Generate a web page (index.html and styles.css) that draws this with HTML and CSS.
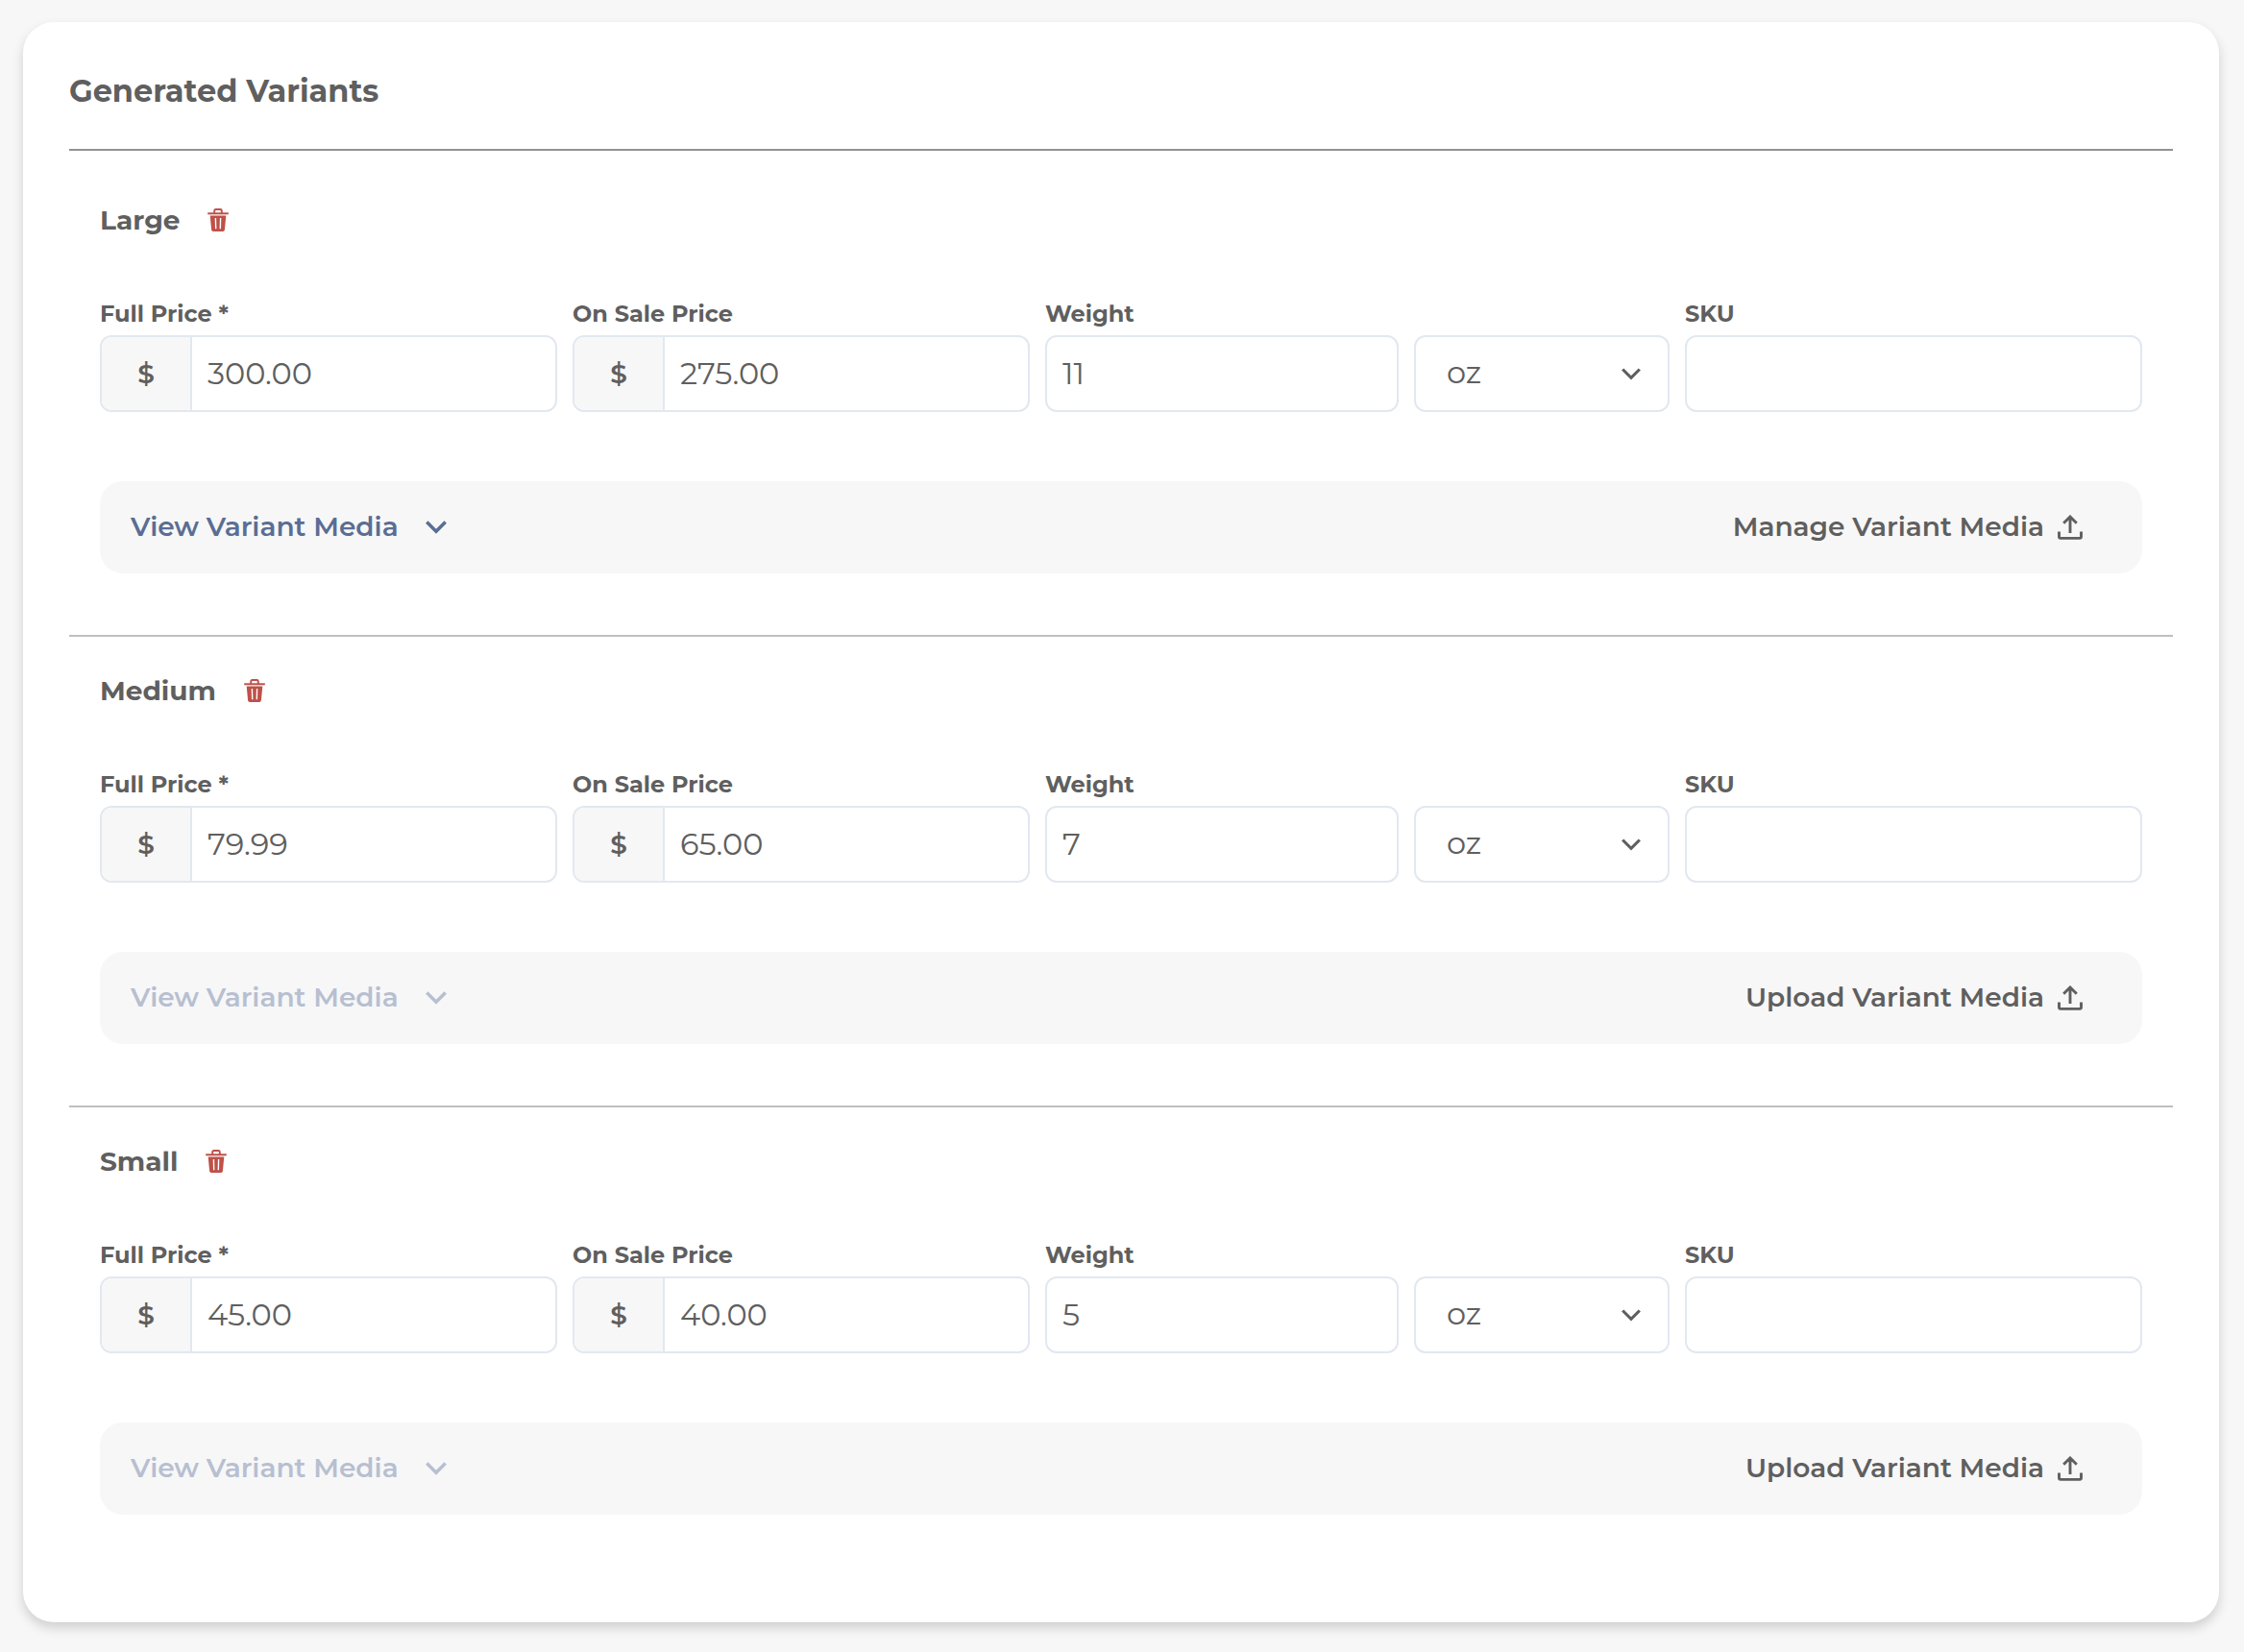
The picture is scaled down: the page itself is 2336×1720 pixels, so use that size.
FILE: index.html
```
<!DOCTYPE html>
<html>
<head>
	<title>Generated Variants</title>
	<meta charset="utf-8">
	<link rel="stylesheet" href="styles.css">
</head>
<body>
	<!-- icons -->
	<svg class="sprite">
		<symbol id="trash" viewBox="0 0 22 24">
			<path d="M7.2 5V2.4Q7.2 1 8.6 1h4.8q1.4 0 1.4 1.4V5" fill="none" stroke="currentColor" stroke-width="1.9"/>
			<path d="M.2 4.3h21.6v2H.2z" fill="currentColor"/>
			<path fill-rule="evenodd" fill="currentColor" d="M2.7 7.5h16.6L17.9 22.2q-.2 1.8-1.9 1.8H6q-1.7 0-1.9-1.8zM7.7 10l.3 11.300h1.400L9.100 10zM12.900 10l-.3 11.300H14l.3-11.300z"/>
		</symbol>
		<symbol id="chevron" viewBox="0 0 22 14">
			<path d="M1.300 1.500L11 11.200l9.700-9.700" fill="none" stroke="currentColor" stroke-width="3.500"/>
		</symbol>
		<symbol id="upload" viewBox="0 0 26 26">
			<path d="M1.500 17.500v5.300q0 1.600 1.600 1.600h19.800q1.600 0 1.600-1.600v-5.300M13 19V2M6.200 8.800L13 2l6.800 6.800" fill="none" stroke="currentColor" stroke-width="2.900"/>
		</symbol>
	</svg>

	<div class="card">
		<h2 class="card-title">Generated Variants</h2>

		<section class="variant">
			<div class="variant-head">
				<h3>Large</h3>
				<svg class="trash"><use href="#trash"/></svg>
			</div>
			<form class="fields">
				<div class="field price">
					<label>Full Price *</label>
					<div class="box"><span class="addon">$</span><input type="text" value="300.00"></div>
				</div>
				<div class="field price">
					<label>On Sale Price</label>
					<div class="box"><span class="addon">$</span><input type="text" value="275.00"></div>
				</div>
				<div class="field weight">
					<label>Weight</label>
					<div class="box"><input type="text" value="11"></div>
				</div>
				<div class="field unit">
					<div class="box select">oz <svg class="arrow"><use href="#chevron"/></svg></div>
				</div>
				<div class="field sku">
					<label>SKU</label>
					<div class="box"><input type="text" value=""></div>
				</div>
			</form>
			<div class="media">
				<a class="view">View Variant Media <svg class="chevron"><use href="#chevron"/></svg></a>
				<a class="manage">Manage Variant Media <svg class="upload"><use href="#upload"/></svg></a>
			</div>
		</section>

		<section class="variant">
			<div class="variant-head">
				<h3>Medium</h3>
				<svg class="trash"><use href="#trash"/></svg>
			</div>
			<form class="fields">
				<div class="field price">
					<label>Full Price *</label>
					<div class="box"><span class="addon">$</span><input type="text" value="79.99"></div>
				</div>
				<div class="field price">
					<label>On Sale Price</label>
					<div class="box"><span class="addon">$</span><input type="text" value="65.00"></div>
				</div>
				<div class="field weight">
					<label>Weight</label>
					<div class="box"><input type="text" value="7"></div>
				</div>
				<div class="field unit">
					<div class="box select">oz <svg class="arrow"><use href="#chevron"/></svg></div>
				</div>
				<div class="field sku">
					<label>SKU</label>
					<div class="box"><input type="text" value=""></div>
				</div>
			</form>
			<div class="media">
				<a class="view disabled">View Variant Media <svg class="chevron"><use href="#chevron"/></svg></a>
				<a class="manage">Upload Variant Media <svg class="upload"><use href="#upload"/></svg></a>
			</div>
		</section>

		<section class="variant">
			<div class="variant-head">
				<h3>Small</h3>
				<svg class="trash"><use href="#trash"/></svg>
			</div>
			<form class="fields">
				<div class="field price">
					<label>Full Price *</label>
					<div class="box"><span class="addon">$</span><input type="text" value="45.00"></div>
				</div>
				<div class="field price">
					<label>On Sale Price</label>
					<div class="box"><span class="addon">$</span><input type="text" value="40.00"></div>
				</div>
				<div class="field weight">
					<label>Weight</label>
					<div class="box"><input type="text" value="5"></div>
				</div>
				<div class="field unit">
					<div class="box select">oz <svg class="arrow"><use href="#chevron"/></svg></div>
				</div>
				<div class="field sku">
					<label>SKU</label>
					<div class="box"><input type="text" value=""></div>
				</div>
			</form>
			<div class="media">
				<a class="view disabled">View Variant Media <svg class="chevron"><use href="#chevron"/></svg></a>
				<a class="manage">Upload Variant Media <svg class="upload"><use href="#upload"/></svg></a>
			</div>
		</section>
	</div>
</body>
</html>
```
FILE: styles.css
```
* {
	box-sizing: border-box;
}
body {
	margin: 0;
	padding: 23px 26px 31px 24px;
	background-color: #f7f7f7;
	color: #5f5f5f;
	font-family: Montserrat, Inter, "Open Sans", sans-serif;
}
.sprite {
	display: none;
}
svg {
	display: block;
	flex: none;
}
.card {
	height: 1666px;
	padding: 52px 48px 0;
	background-color: #fff;
	border-radius: 32px;
	box-shadow: 0 6px 12px rgba(0, 0, 0, 0.16);
}
.card-title {
	margin: 0;
	padding-bottom: 41px;
	border-bottom: 2px solid #929292;
	font-size: 32px;
	line-height: 39px;
	font-weight: 700;
}

/* one variant */
.variant {
	padding: 39px 32px 64px;
	border-bottom: 2px solid #bfbfbf;
}
.card-title + .variant {
	padding-top: 55px;
}
.variant:last-child {
	border-bottom: none;
}
.variant-head {
	display: flex;
	align-items: center;
	gap: 29px;
	height: 34px;
	margin-bottom: 66px;
}
.variant-head h3 {
	margin: 0;
	font-size: 28px;
	line-height: 34px;
	font-weight: 700;
}
.trash {
	width: 22px;
	height: 24px;
	color: #be5149;
}

/* form row */
.fields {
	display: flex;
	align-items: flex-end;
	gap: 16px;
	margin: 0;
}
.field label {
	display: block;
	margin-bottom: 8px;
	font-size: 24px;
	line-height: 29px;
	font-weight: 700;
}
.price, .sku {
	width: 476px;
}
.weight {
	width: 368px;
}
.unit {
	width: 266px;
}
.box {
	display: flex;
	height: 80px;
	border: 2px solid #e2e8f0;
	border-radius: 12px;
	background-color: #fff;
	overflow: hidden;
}
.addon {
	flex: none;
	width: 94px;
	border-right: 2px solid #e2e8f0;
	background-color: #f7f7f7;
	font-size: 28px;
	line-height: 76px;
	font-weight: 600;
	text-align: center;
}
.box input {
	flex: 1;
	min-width: 0;
	border: none;
	outline: none;
	padding: 0 16px 1px;
	background: none;
	color: #5f5f5f;
	font-family: inherit;
	font-size: 32px;
	font-weight: 400;
}
.select {
	align-items: center;
	justify-content: space-between;
	padding: 0 28px 3px 32px;
	font-size: 32px;
	font-weight: 400;
}
.arrow {
	width: 20px;
	height: 13px;
	margin-top: 4px;
}

/* media bar */
.media {
	display: flex;
	align-items: center;
	justify-content: space-between;
	height: 96px;
	margin-top: 72px;
	padding: 0 62px 2px 32px;
	border-radius: 24px;
	background-color: #f7f7f7;
	font-size: 28px;
	font-weight: 600;
}
.view, .manage {
	display: flex;
	align-items: center;
}
.view {
	gap: 28px;
	color: #5a6d94;
}
.view.disabled {
	color: #b7bfd1;
}
.manage {
	gap: 14px;
}
.chevron {
	width: 22px;
	height: 14px;
	margin-top: 2px;
}
.upload {
	width: 26px;
	height: 26px;
	margin-top: 2px;
}
```
